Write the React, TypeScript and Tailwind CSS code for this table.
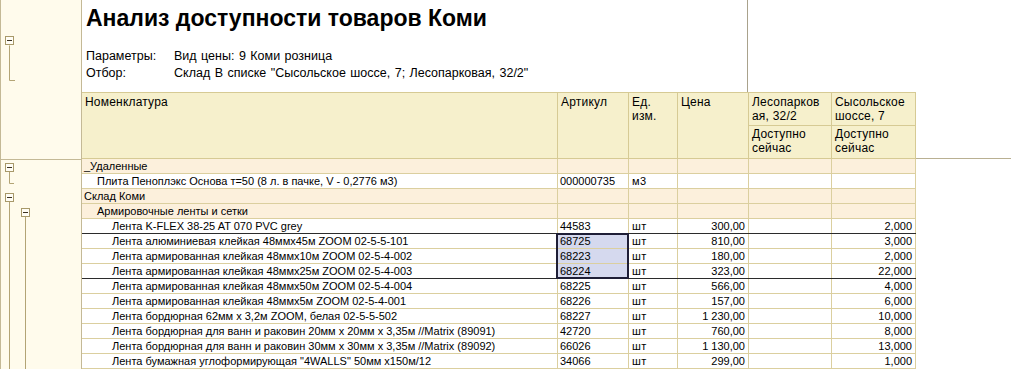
type Row = {
  name: string;
  level: 0 | 1 | 2;
  group?: boolean;
  art?: string;
  unit?: string;
  price?: string;
  sys?: string;
  darkBottom?: boolean;
};

const rowsTop: Row[] = [
  { name: "_Удаленные", level: 0, group: true },
  { name: "Плита Пеноплэкс Основа т=50 (8 л. в пачке, V - 0,2776 м3)", level: 1, art: "000000735", unit: "м3" },
  { name: "Склад Коми", level: 0, group: true },
  { name: "Армировочные ленты и сетки", level: 1, group: true },
  { name: "Лента K-FLEX 38-25 AT 070 PVC grey", level: 2, art: "44583", unit: "шт", price: "300,00", sys: "2,000", darkBottom: true },
];

const rowsSel: Row[] = [
  { name: "Лента алюминиевая клейкая 48ммx45м ZOOM 02-5-5-101", level: 2, art: "68725", unit: "шт", price: "810,00", sys: "3,000" },
  { name: "Лента армированная клейкая 48ммx10м ZOOM 02-5-4-002", level: 2, art: "68223", unit: "шт", price: "180,00", sys: "2,000" },
  { name: "Лента армированная клейкая 48ммx25м ZOOM 02-5-4-003", level: 2, art: "68224", unit: "шт", price: "323,00", sys: "22,000", darkBottom: true },
];

const rowsBottom: Row[] = [
  { name: "Лента армированная клейкая 48ммx50м ZOOM 02-5-4-004", level: 2, art: "68225", unit: "шт", price: "566,00", sys: "4,000" },
  { name: "Лента армированная клейкая 48ммx5м ZOOM 02-5-4-001", level: 2, art: "68226", unit: "шт", price: "157,00", sys: "6,000" },
  { name: "Лента бордюрная 62мм x 3,2м ZOOM, белая 02-5-5-502", level: 2, art: "68227", unit: "шт", price: "1 230,00", sys: "10,000" },
  { name: "Лента бордюрная для ванн и раковин 20мм x 20мм x 3,35м //Matrix (89091)", level: 2, art: "42720", unit: "шт", price: "760,00", sys: "8,000" },
  { name: "Лента бордюрная для ванн и раковин 30мм x 30мм x 3,35м //Matrix (89092)", level: 2, art: "66026", unit: "шт", price: "1 130,00", sys: "13,000" },
  { name: "Лента бумажная углоформирующая \"4WALLS\" 50мм x150м/12", level: 2, art: "34066", unit: "шт", price: "299,00", sys: "1,000" },
];

const indent = ["pl-[2px]", "pl-[15px]", "pl-[30px]"];

function ReportRow({ row, selected }: { row: Row; selected?: boolean }) {
  const bg = row.group ? "bg-[#fcf0dc]" : "bg-white";
  const line = row.darkBottom ? "border-[#2b2b2b]" : "border-[#dbcf9f]";
  const cell = "h-[14px] leading-[14px] whitespace-nowrap overflow-hidden border-r border-[#dbcf9f]";
  return (
    <div className={`flex w-[834px] h-[15px] border-b ${line} ${bg}`}>
      <div className={`${cell} w-[476px] ${indent[row.level]}`}>{row.name}</div>
      <div className={`${cell} w-[71px] pl-[2px] ${selected ? "bg-[#d5d9ee]" : ""}`}>{row.art}</div>
      <div className={`${cell} w-[49px] pl-[3px] tracking-[0.5px]`}>{row.unit}</div>
      <div className={`${cell} w-[71px] pr-[3px] text-right`}>{row.price}</div>
      <div className={`${cell} w-[83px]`}></div>
      <div className={`${cell} w-[84px] pr-[3px] text-right`}>{row.sys}</div>
    </div>
  );
}

function Gutter() {
  const line = "#b3a475";
  return (
    <div className="w-[82px] shrink-0 flex flex-col bg-[#fffbec] border-x border-[#c4b996]">
      <div className="h-[160px] border-b border-[#c4b996]">
        <svg width="80" height="159" className="block">
          <path d="M8.5 45.5 V80.5 H14" stroke={line} fill="none" />
          <rect x="4.5" y="36.5" width="8" height="8" fill="#fffdf5" stroke="#a8996a" />
          <path d="M6 40.5 H11" stroke="#3b3222" />
        </svg>
      </div>
      <svg width="80" height="209" className="block">
        <path d="M8.5 11.5 V23.5 H13" stroke={line} fill="none" />
        <rect x="4.5" y="3.5" width="8" height="8" fill="#fffdf5" stroke="#a8996a" />
        <path d="M6 7.5 H11" stroke="#3b3222" />
        <path d="M8.5 41.5 V209" stroke={line} fill="none" />
        <rect x="4.5" y="33.5" width="8" height="8" fill="#fffdf5" stroke="#a8996a" />
        <path d="M6 37.5 H11" stroke="#3b3222" />
        <path d="M24.5 56.5 V209" stroke={line} fill="none" />
        <rect x="20.5" y="48.5" width="8" height="8" fill="#fffdf5" stroke="#a8996a" />
        <path d="M22 52.5 H27" stroke="#3b3222" />
      </svg>
    </div>
  );
}

function Header() {
  const hc = "border-r border-[#d6ca94] pl-[3px] pt-[2px] leading-[14px]";
  return (
    <div className="flex">
      <div className="flex w-[834px] h-[67px] border-y border-[#d6ca94] bg-[#f6f0cc] text-[12px] tracking-[0.2px]">
        <div className={`${hc} w-[476px]`}>Номенклатура</div>
        <div className={`${hc} w-[71px]`}>Артикул</div>
        <div className={`${hc} w-[49px]`}>
          Ед.
          <br />
          изм.
        </div>
        <div className={`${hc} w-[71px]`}>Цена</div>
        <div className="flex flex-col w-[83px] border-r border-[#d6ca94]">
          <div className="h-[33px] border-b border-[#d6ca94] pl-[3px] pt-[2px] leading-[14px]">
            Лесопарков
            <br />
            ая, 32/2
          </div>
          <div className="pl-[3px] pt-[1px] leading-[14px]">
            Доступно
            <br />
            сейчас
          </div>
        </div>
        <div className="flex flex-col w-[84px] border-r border-[#d6ca94]">
          <div className="h-[33px] border-b border-[#d6ca94] pl-[3px] pt-[2px] leading-[14px]">
            Сысольское
            <br />
            шоссе, 7
          </div>
          <div className="pl-[3px] pt-[1px] leading-[14px]">
            Доступно
            <br />
            сейчас
          </div>
        </div>
      </div>
      <div className="flex-1 h-[67px] border-b border-[#b9b092]"></div>
    </div>
  );
}

export default function App() {
  return (
    <div className="w-[1011px] h-[369px] overflow-hidden bg-white flex text-[11px] text-black font-['Liberation_Sans',Arial,sans-serif]">
      <Gutter />
      <div className="flex-1 flex flex-col">
        <div className="flex h-[93px]">
          <div className="w-[666px] border-r border-[#a9a28c] pl-[4px]">
            <div className="mt-[5px] text-[23px] font-bold leading-[27px]">Анализ доступности товаров Коми</div>
            <div className="mt-[16px] leading-[17px] text-[12.5px] [word-spacing:1px]">
              <div className="flex">
                <span className="w-[88px]">Параметры:</span>
                <span>Вид цены: 9 Коми розница</span>
              </div>
              <div className="flex">
                <span className="w-[88px]">Отбор:</span>
                <span>Склад В списке "Сысольское шоссе, 7; Лесопарковая, 32/2"</span>
              </div>
            </div>
          </div>
        </div>
        <Header />
        {rowsTop.map((r, i) => (
          <ReportRow key={i} row={r} />
        ))}
        <div className="relative">
          {rowsSel.map((r, i) => (
            <ReportRow key={i} row={r} selected />
          ))}
          <div className="absolute left-[474px] top-[-1px] w-[73px] h-[46px] border-2 border-[#1e1e36]"></div>
        </div>
        {rowsBottom.map((r, i) => (
          <ReportRow key={i} row={r} />
        ))}
      </div>
    </div>
  );
}
